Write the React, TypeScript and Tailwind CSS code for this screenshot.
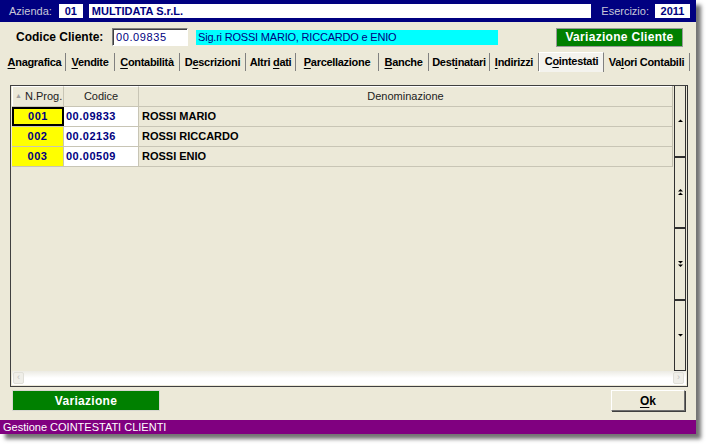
import React from 'react';

const font = { fontFamily: '"Liberation Sans", Arial, sans-serif' };

const tabs: { label: string; u: number; w: number; active?: boolean }[] = [
    { label: 'Anagrafica', u: 0, w: 62 },
    { label: 'Vendite', u: 0, w: 49 },
    { label: 'Contabilità', u: 0, w: 65 },
    { label: 'Descrizioni', u: 1, w: 66 },
    { label: 'Altri dati', u: 6, w: 50 },
    { label: 'Parcellazione', u: 0, w: 83 },
    { label: 'Banche', u: 0, w: 50 },
    { label: 'Destinatari', u: 4, w: 61 },
    { label: 'Indirizzi', u: 0, w: 49 },
    { label: 'Cointestati', u: 1, w: 65, active: true },
    { label: 'Valori Contabili', u: 2, w: 86 },
];

const rows = [
    { n: '001', c: '00.09833', d: 'ROSSI MARIO' },
    { n: '002', c: '00.02136', d: 'ROSSI RICCARDO' },
    { n: '003', c: '00.00509', d: 'ROSSI ENIO' },
];

const Mnemonic = ({ text, u }: { text: string; u: number }) => (
    <span className="whitespace-pre">
        {text.slice(0, u)}
        <span className="underline underline-offset-2">{text[u]}</span>
        {text.slice(u + 1)}
    </span>
);

const Arrow = ({ kind }: { kind: 'up' | 'up2' | 'down2' | 'down' }) => (
    <svg width="7" height="8" viewBox="0 0 7 8">
        {kind === 'up' && <path d="M1 5h5L3.5 2.5z" fill="#000" />}
        {kind === 'down' && <path d="M1 3h5L3.5 5.5z" fill="#000" />}
        {kind === 'up2' && (
            <>
                <path d="M1 3.5h5L3.5 1z" fill="#000" />
                <path d="M1 7h5L3.5 4.5z" fill="#000" />
            </>
        )}
        {kind === 'down2' && (
            <>
                <path d="M1 1h5L3.5 3.5z" fill="#000" />
                <path d="M1 4.5h5L3.5 7z" fill="#000" />
            </>
        )}
    </svg>
);

export default function App() {
    return (
        <div className="w-[706px] h-[444px] bg-white overflow-hidden" style={font}>
            <div className="w-[696px] h-[434px] bg-[#ECE9D8] flex flex-col shadow-[5px_5px_4px_rgba(0,0,0,0.55)]">
                {/* top bar */}
                <div className="h-[22px] bg-[#000080] flex items-center pl-[9px] pr-[6px] text-[11px]">
                    <span className="text-[#c8c8d8]">Azienda:</span>
                    <div className="ml-[7px] w-[24px] h-[14px] bg-white text-[#000080] font-bold flex items-center justify-center">01</div>
                    <div className="ml-[6px] w-[502px] h-[14px] bg-white text-[#000080] font-bold flex items-center pl-[3px]">MULTIDATA S.r.L.</div>
                    <span className="ml-auto text-[#c8c8d8]">Esercizio:</span>
                    <div className="ml-[6px] w-[35px] h-[14px] bg-white text-[#000080] font-bold flex items-center justify-center">2011</div>
                </div>

                {/* codice cliente */}
                <div className="h-[28px] flex items-center pl-[16px] pt-[2px]">
                    <span className="text-[12px] font-bold text-black w-[96px]">Codice Cliente:</span>
                    <div className="w-[76px] h-[18px] bg-white border-t border-l border-[#808080] border-r border-b border-r-white border-b-white shadow-[inset_1px_1px_0_#404040] text-[11px] text-[#000080] flex items-center pl-[3px] tracking-[0.6px]">
                        00.09835
                    </div>
                    <div className="ml-[8px] w-[302px] h-[15px] bg-[#00FFFF] text-[11px] text-[#000080] flex items-center pl-[2px] tracking-[-0.2px]">
                        Sig.ri ROSSI MARIO, RICCARDO e ENIO
                    </div>
                    <div className="ml-[58px] w-[127px] h-[19px] bg-[#008000] border border-[#9a9a9a] text-white text-[12px] font-bold flex items-center justify-center tracking-[0.3px]">
                        Variazione Cliente
                    </div>
                </div>

                {/* tabs */}
                <div className="h-[22px] flex items-end pl-[4px]">
                    {tabs.map((t) =>
                        t.active ? (
                            <div
                                key={t.label}
                                className="h-[20px] bg-[#F4F3EE] border-t border-l border-white border-r border-r-[#808080] flex items-center justify-center text-[11px] font-bold text-black pb-[3px] tracking-[-0.3px]"
                                style={{ width: t.w }}
                            >
                                <Mnemonic text={t.label} u={t.u} />
                            </div>
                        ) : (
                            <div
                                key={t.label}
                                className="h-[18px] border-r border-[#808080] flex items-center justify-center text-[11px] font-bold text-black mb-[1px] tracking-[-0.3px]"
                                style={{ width: t.w }}
                            >
                                <Mnemonic text={t.label} u={t.u} />
                            </div>
                        )
                    )}
                </div>

                {/* grid panel */}
                <div className="mt-[13px] ml-[10px] w-[678px] h-[302px] border border-[#404040] border-r-[#303030] flex flex-col">
                    <div className="flex flex-1 min-h-0">
                        <div className="flex-1 pl-[1px] flex flex-col">
                            <div className="w-[661px] flex flex-col border-r border-[#c0bdad]">
                                <div className="h-[21px] flex text-[11px] text-[#222] border-b border-[#c8c5b5]">
                                    <div className="w-[52px] flex items-center pl-[2px] border-r border-[#c8c5b5] border-l border-l-white border-t border-t-white">
                                        <span className="text-[7px] text-[#a0a0a0] mr-[3px]">▲</span>N.Prog.
                                    </div>
                                    <div className="w-[75px] flex items-center justify-center border-r border-[#c8c5b5] border-t border-t-white">Codice</div>
                                    <div className="flex-1 flex items-center justify-center border-t border-t-white">Denominazione</div>
                                </div>
                                {rows.map((r, i) => (
                                    <div key={r.n} className="h-[20px] flex text-[11px] font-bold border-b border-[#c8c5b5]">
                                        <div
                                            className={`w-[52px] bg-[#FFFF00] text-[#000080] flex items-center justify-center tracking-[0.5px] ${
                                                i === 0 ? 'border-2 border-black' : 'border-r border-[#c8c5b5]'
                                            }`}
                                        >
                                            {r.n}
                                        </div>
                                        <div className="w-[75px] bg-white text-[#000080] flex items-center pl-[2px] border-r border-[#c8c5b5] tracking-[0.5px]">
                                            {r.c}
                                        </div>
                                        <div className="flex-1 flex items-center pl-[3px] text-black">{r.d}</div>
                                    </div>
                                ))}
                            </div>
                        </div>
                        {/* vertical scroller */}
                        <div className="w-[12px] mr-[1px] border-l border-r border-[#303030] flex flex-col">
                            {(['up', 'up2', 'down2', 'down'] as const).map((k, i) => (
                                <div
                                    key={k}
                                    className={`flex-1 flex items-center justify-center ${i < 3 ? 'border-b-2 border-[#303030]' : 'border-b border-[#303030]'}`}
                                >
                                    <Arrow kind={k} />
                                </div>
                            ))}
                        </div>
                    </div>
                    {/* horizontal scroller */}
                    <div className="h-[14px] mx-[1px] mb-[1px] flex items-center bg-gradient-to-b from-[#ECEBE4] via-white to-white">
                        <div className="w-[11px] h-[12px] ml-[1px] bg-[#EFEEE8] border border-[#e0dfd8] rounded-[2px] text-[#c0c0c0] text-[9px] flex items-center justify-center">‹</div>
                        <div className="flex-1" />
                        <div className="w-[11px] h-[12px] mr-[2px] bg-[#EFEEE8] border border-[#e0dfd8] rounded-[2px] text-[#c0c0c0] text-[9px] flex items-center justify-center">›</div>
                    </div>
                </div>

                {/* buttons */}
                <div className="mt-[3px] h-[21px] flex pl-[12px]">
                    <div className="w-[148px] h-[21px] bg-[#008000] border border-[#d8d8d0] text-white text-[12px] font-bold flex items-center justify-center tracking-[0.3px]">
                        Variazione
                    </div>
                    <div className="ml-auto mr-[11px] w-[74px] h-[21px] bg-[#ECE9D8] border border-white border-r-[#707070] border-b-[#707070] shadow-[1px_1px_0_#404040] text-[12px] font-bold text-black flex items-center justify-center">
                        <span className="underline underline-offset-2">O</span>k
                    </div>
                </div>

                {/* status bar */}
                <div className="mt-[9px] h-[14px] bg-[#800080] text-white text-[11px] flex items-center pl-[3px]">
                    Gestione COINTESTATI CLIENTI
                </div>
            </div>
        </div>
    );
}
